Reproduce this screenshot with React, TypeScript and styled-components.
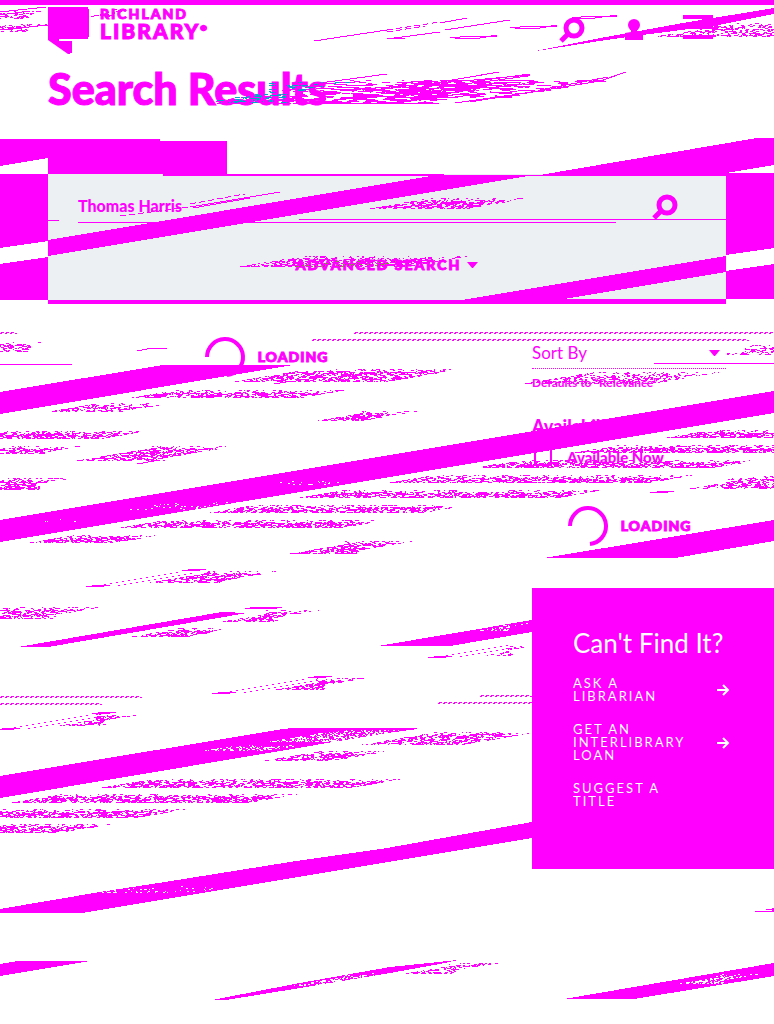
import React from "react";
import styled, { createGlobalStyle } from "styled-components";

const MAGENTA = "#ff00ff";
const PANEL = "#ecf0f3";

const GlobalStyle = createGlobalStyle`
  *, *::before, *::after { box-sizing: border-box; }
  body {
    margin: 0;
    background: #fff;
    color: ${MAGENTA};
    font-family: Lato, "Open Sans", sans-serif;
  }
  button, input, select { font: inherit; color: inherit; }
`;

const Page = styled.div`
  position: relative;
  min-height: 100vh;
  overflow: hidden;
  border-top: 5px solid ${MAGENTA};
`;

const Header = styled.header`
  display: flex;
  justify-content: space-between;
  align-items: flex-start;
  height: 56px;
  padding: 2px 61px 0 48px;
`;

const Brand = styled.a`
  display: flex;
  gap: 11px;
  color: inherit;
  text-decoration: none;
`;

const BrandText = styled.span`
  display: flex;
  flex-direction: column;
  font-weight: 900;
  -webkit-text-stroke: 1px ${MAGENTA};
`;

const BrandLine = styled.span<{ $large?: boolean }>`
  font-size: ${(p) => (p.$large ? 21 : 14)}px;
  line-height: ${(p) => (p.$large ? 20 : 14)}px;
  letter-spacing: 2px;
  white-space: nowrap;
`;

const Mark = styled.sup`
  font-size: 8px;
  line-height: 0;
  letter-spacing: 0;
`;

const Tools = styled.nav`
  display: flex;
  align-items: flex-start;
  padding-top: 8px;
  gap: 40px;
`;

const IconButton = styled.button<{ $lowered?: boolean }>`
  display: block;
  margin-top: ${(p) => (p.$lowered ? 2 : 0)}px;
  border: 0;
  padding: 0;
  background: none;
  line-height: 0;
  cursor: pointer;
`;

const Title = styled.h1`
  margin: 0;
  padding: 0 48px;
  font-size: 43px;
  line-height: 56px;
  font-weight: 900;
  -webkit-text-stroke: 1px ${MAGENTA};
`;

const SearchSection = styled.section`
  padding: 24px 48px 0;
`;

const Tab = styled.div`
  width: 179px;
  height: 33px;
  background: ${MAGENTA};
`;

const SearchPanel = styled.form`
  display: flex;
  flex-direction: column;
  align-items: center;
  height: 130px;
  padding: 17px 48px 0 30px;
  background: ${PANEL};
  border-bottom: 4px solid ${MAGENTA};
`;

const SearchRow = styled.div`
  display: flex;
  width: 100%;
  gap: 36px;
`;

const SearchInput = styled.input`
  flex: 1;
  min-width: 0;
  height: 32px;
  padding: 0 0 2px;
  border: 0;
  border-bottom: 1px solid ${MAGENTA};
  border-radius: 0;
  background: transparent;
  outline: 0;
  font-size: 16px;
  font-weight: 900;
`;

const Advanced = styled.button`
  display: flex;
  align-items: center;
  gap: 6px;
  margin: 32px 0 0 18px;
  padding: 0;
  border: 0;
  background: none;
  font-size: 14px;
  line-height: 20px;
  font-weight: 900;
  letter-spacing: 2px;
  -webkit-text-stroke: 1px ${MAGENTA};
`;

const Columns = styled.main`
  display: grid;
  grid-template-columns: minmax(0, 1fr) 242px;
  column-gap: 48px;
  padding: 32px 0 155px 48px;
`;

const LoadingRow = styled.div<{ $side?: boolean }>`
  display: flex;
  justify-content: center;
  align-items: center;
  gap: 12px;
  height: 42px;
  margin: ${(p) => (p.$side ? "38px 48px 40px 0" : "0")};
  font-size: 14px;
  line-height: 20px;
  font-weight: 900;
  letter-spacing: 1px;
  -webkit-text-stroke: 1px ${MAGENTA};
`;

const Controls = styled.div`
  margin-right: 48px;
`;

const SortBox = styled.div`
  position: relative;
  border-bottom: 1px dotted ${MAGENTA};
`;

const SortSelect = styled.select`
  display: block;
  width: 100%;
  height: 32px;
  padding: 0;
  border: 0;
  appearance: none;
  background: none;
  font-size: 17px;
`;

const SortArrow = styled.svg`
  position: absolute;
  top: 14px;
  right: 6px;
`;

const Hint = styled.p`
  margin: 5px 0 0;
  font-size: 12px;
  line-height: 18px;
  font-weight: 700;
`;

const FilterTitle = styled.h2`
  margin: 22px 0 0;
  font-size: 18px;
  line-height: 24px;
  font-weight: 900;
`;

const CheckLabel = styled.label`
  display: flex;
  align-items: center;
  gap: 15px;
  height: 20px;
  margin: 9px 0 0 2px;
  font-size: 15px;
  font-weight: 900;
`;

const Checkbox = styled.input`
  appearance: none;
  width: 18px;
  height: 18px;
  margin: 0;
  border: 2px solid ${MAGENTA};
  background: #fff;
`;

const HelpCard = styled.section`
  margin-top: 41px;
  padding: 40px 44px 41px 41px;
  background: ${MAGENTA};
  color: #fff;
`;

const HelpTitle = styled.h2`
  margin: 0 0 19px;
  font-size: 26px;
  line-height: 30px;
  font-weight: 400;
  white-space: nowrap;
`;

const HelpLink = styled.a`
  display: flex;
  justify-content: space-between;
  align-items: center;
  margin-bottom: 20px;
  color: inherit;
  font-size: 13px;
  line-height: 13px;
  letter-spacing: 2px;
  text-decoration: none;
`;

const HelpLine = styled.span`
  display: block;
`;

const Streaks = styled.svg`
  position: absolute;
  top: -5px;
  left: 0;
  width: 100%;
  height: auto;
  pointer-events: none;
  shape-rendering: crispEdges;
`;

const Magnifier = () => (
  <svg width="26" height="26" viewBox="0 0 26 26" fill="none" stroke={MAGENTA} strokeWidth="5" aria-hidden="true">
    <circle cx="15" cy="11" r="8" />
    <path d="M9 17L2 24" />
  </svg>
);

const Caret = () => (
  <svg width="11" height="6" viewBox="0 0 11 6" aria-hidden="true">
    <path d="M0 0H11L6 6H5Z" fill={MAGENTA} />
  </svg>
);

const Arrow = () => (
  <svg width="14" height="12" viewBox="0 0 14 12" fill="none" stroke="#fff" strokeWidth="2" aria-hidden="true">
    <path d="M1 6H12M7 1L12 6L7 11" />
  </svg>
);

const Spinner = () => (
  <svg width="42" height="42" viewBox="0 0 42 42" fill="none" stroke={MAGENTA} strokeWidth="4" aria-hidden="true">
    <path d="M3 21A18 18 0 1 1 23 39" />
  </svg>
);

/* Speckled slanted patches: left, right, top, bottom, fill ratio in percent. */
type Patch = [number, number, number, number, number];

function speckle(patches: Patch[], longest = 4): string {
  let seed = 41;
  const next = () => {
    seed = (seed * 1103515245 + 12345) % 2147483648;
    return seed / 2147483648;
  };
  let d = "";
  patches.forEach(([left, right, top, bottom, fill]) => {
    const rows = bottom - top;
    for (let i = 0; i < rows; i++) {
      const fromBottom = rows - 1 - i;
      const edge = i < 2 ? 0.4 : i === 2 ? 0.8 : 1.1;
      const start = left <= 0 ? 0 : left + Math.min(fromBottom * 6, (right - left) * 0.45);
      const end = right >= 774 ? 774 : right - Math.min(i * 6, (right - left) * 0.45);
      let x = start;
      while (x < end) {
        const len = 1 + Math.floor(next() * longest);
        if (next() * 100 < fill * edge) d += `M${Math.round(x)} ${top + i}h${len}v1h-${len}z`;
        x += len;
      }
    }
  });
  return d;
}

function zigzag(x1: number, x2: number, y: number): string {
  let d = "";
  for (let x = x1; x < x2; x += 5) {
    d += `M${x} ${y + 1}h2v1h-2z`;
    if (x + 4 <= x2) d += `M${x + 1} ${y}h3v1h-3z`;
  }
  return d;
}

function outline(x1: number, y1: number, x2: number, y2: number): string {
  let d = `M${x1} ${y1}h18v1h-18zM${x1 + 6} ${y1 - 1}h18v1h-18z`;
  if (x2 < 500) d += `M${x2} ${y2}h18v1h-18zM${x2 + 6} ${y2 - 1}h18v1h-18z`;
  for (let x = x1 + 18; x < x2; x += 6) {
    const y = y1 - 1 - Math.round((x - x1 - 12) / 6);
    d += `M${x} ${y}h2v1h-2zM${x + 14} ${y + 1}h2v1h-2z`;
  }
  return d;
}

const bands = [
  "0,139 160,139 160,141 131,141 48,154 48,158 0,166",
  "0,174 48,174 48,241 0,248",
  "0,264 48,257 48,300 0,300",
  "534,176 757,138 774,138 774,165 726,173 726,176",
  "726,173 774,173 774,248 726,255",
  "726,271 774,264 774,299 726,299",
  "48,240 437,175 528,176 48,256",
  "462,300 726,256 726,272 564,299 726,299 726,301 462,301",
  "0,392 163,365 293,365 0,414",
  "0,520 774,391 774,413 0,542",
  "544,558 774,520 774,541 675,558",
  "18,647 222,612 247,613 48,647",
  "378,646 532,620 532,632 450,646",
  "0,776 283,729 418,729 387,733 0,798",
  "0,909 100,892 165,882 290,862 387,848 532,822 532,838 82,913 0,913",
  "0,964 18,961 90,961 0,976",
  "212,1000 300,983 390,967 458,960 445,963 390,973 300,988 226,1000",
  "564,999 774,963 774,976 634,999",
  "530,52 606,37 683,23 774,8 774,14 713,26 642,35 606,40",
];

const rules: [number, number, number, number][] = [
  [163, 174, 281, 2],
  [227, 175, 499, 1],
  [48, 220, 11, 1],
  [299, 219, 427, 1],
  [0, 364, 72, 1],
  [654, 363, 120, 1],
  [288, 728, 129, 1],
  [245, 608, 32, 1],
  [250, 607, 32, 1],
  [650, 492, 18, 1],
  [657, 491, 17, 1],
  [755, 911, 19, 1],
  [766, 909, 8, 1],
  [772, 908, 2, 4],
];

const strokes = [
  "M314 41L387 30M387 39L440 32M387 39L405 38M445 30L510 20",
  "M440 23L467 18M450 38L470 36H497M455 38H480L497 35",
  "M510 28L530 26H557M515 28H540L557 25M572 18L590 16H617M577 18H595L617 15",
  "M320 83L387 74M435 83L499 72M440 83L530 75M520 94L600 81L626 72M540 90L608 77",
  "M470 82L530 74M475 83L528 76M470 102L550 89M455 103L540 91M387 98L460 84",
  "M190 207L280 192M193 208L250 198",
  "M137 351L152 348H167M0 12L46 7M0 15L30 11",
  "M0 30L48 25M274 384L292 381M137 464L160 460",
];

const dashes = [
  "M387 30L440 22M387 32L425 26M120 216L190 207M190 204L245 194",
];

const fine: Patch[] = [
  [0, 50, 11, 19, 45], [0, 50, 24, 32, 45], [88, 132, 9, 17, 42],
  [655, 774, 23, 37, 38],
  [368, 528, 198, 209, 56], [240, 468, 256, 267, 50],
  [0, 52, 342, 352, 38], [721, 774, 345, 355, 35],
  [235, 461, 369, 382, 50], [132, 345, 390, 398, 58], [49, 170, 403, 412, 54],
  [318, 416, 411, 421, 56], [0, 145, 431, 439, 58], [0, 80, 446, 454, 54],
  [77, 234, 446, 461, 54], [0, 70, 478, 490, 56],
  [525, 720, 372, 384, 40], [666, 774, 430, 438, 54], [575, 774, 445, 453, 56],
  [475, 757, 460, 468, 56], [390, 693, 475, 483, 56], [300, 602, 490, 498, 56],
  [210, 467, 505, 513, 56], [121, 384, 520, 528, 56], [30, 158, 535, 543, 56],
  [290, 412, 541, 554, 56], [690, 774, 476, 489, 46],
  [150, 277, 571, 583, 56], [0, 100, 607, 619, 54], [222, 320, 610, 622, 46],
  [132, 235, 628, 637, 50], [276, 364, 678, 690, 56], [60, 140, 714, 726, 54],
  [265, 387, 751, 761, 54], [102, 400, 779, 788, 56], [12, 297, 794, 803, 56],
  [0, 185, 809, 818, 56], [0, 110, 824, 833, 56],
  [362, 536, 732, 745, 54],
  [105, 190, 885, 893, 30],
  [405, 495, 963, 974, 42], [485, 532, 646, 656, 30],
];

const texture = speckle(fine, 3);
const sweep = speckle([
  [204, 460, 80, 104, 50], [310, 540, 80, 104, 60], [390, 608, 80, 98, 40],
], 12);
const tinted = speckle([[205, 348, 82, 103, 28]], 7);
const olive = speckle([[292, 408, 261, 267, 16]], 3);
const holes = speckle([
  [30, 100, 519, 523, 8], [130, 255, 500, 510, 8], [265, 345, 481, 485, 10],
  [205, 300, 745, 751, 36], [270, 400, 730, 742, 40],
  [480, 531, 623, 631, 40], [100, 230, 886, 893, 14],
  [292, 400, 973, 986, 30], [680, 760, 974, 984, 46],
], 2);

const zigzags =
  zigzag(0, 17, 332) + zigzag(354, 774, 332) + zigzag(312, 749, 339) +
  zigzag(0, 143, 696) + zigzag(0, 101, 703) + zigzag(480, 532, 695) + zigzag(438, 532, 702);

const outlines =
  outline(86, 586, 182, 570) + outline(212, 693, 308, 677) + outline(-4, 729, 92, 713) + outline(428, 657, 508, 643);

const Artwork = () => (
  <Streaks viewBox="0 0 774 1024" fill={MAGENTA} aria-hidden="true">
    <polygon points="48,141 131,141 48,147" fill={PANEL} />
    {bands.map((points) => <polygon key={points} points={points} />)}
    {rules.map(([x, y, width, height]) => (
      <rect key={`${x}-${y}`} x={x} y={y} width={width} height={height} />
    ))}
    <path d={strokes.join("")} fill="none" stroke={MAGENTA} />
    <path d={dashes.join("")} fill="none" stroke={MAGENTA} strokeDasharray="6 3" />
    <path d={texture + sweep + zigzags + outlines} />
    <path d={tinted} fill="#00a8cc" />
    <path d={olive} fill="#78a02c" />
    <path d={holes} fill="#fff" />
  </Streaks>
);

const helpLinks = [
  { lines: ["ASK A", "LIBRARIAN"], arrow: true },
  { lines: ["GET AN", "INTERLIBRARY", "LOAN"], arrow: true },
  { lines: ["SUGGEST A", "TITLE"], arrow: false },
];

export default function App() {
  return (
    <Page>
      <GlobalStyle />
      <Header>
        <Brand href="#" aria-label="Richland Library">
          <svg width="41" height="47" viewBox="0 0 41 47" fill={MAGENTA} aria-hidden="true">
            <path d="M0 0H40V2H41V30H40V32H11V34H24V46H22V47H20L0 33Z" />
          </svg>
          <BrandText>
            <BrandLine>RICHLAND</BrandLine>
            <BrandLine $large>LIBRARY<Mark>®</Mark></BrandLine>
          </BrandText>
        </Brand>
        <Tools aria-label="Site tools">
          <IconButton $lowered aria-label="Search"><Magnifier /></IconButton>
          <IconButton aria-label="Account">
            <svg width="18" height="25" viewBox="0 0 18 25" fill={MAGENTA} aria-hidden="true">
              <circle cx="9" cy="10" r="6" />
              <path d="M6 14H12V17H18V25H0V18L6 17Z" />
            </svg>
          </IconButton>
          <IconButton aria-label="Menu">
            <svg width="30" height="24" viewBox="0 0 30 24" fill={MAGENTA} aria-hidden="true">
              <path d="M0 0H30V4H0ZM0 10H30V14H0ZM0 20H30V24H0ZM19 4H30V10H19Z" />
            </svg>
          </IconButton>
        </Tools>
      </Header>
      <Title>Search Results</Title>
      <SearchSection>
        <Tab />
        <SearchPanel onSubmit={(e) => e.preventDefault()}>
          <SearchRow>
            <SearchInput aria-label="Search the catalog" defaultValue="Thomas Harris" />
            <IconButton type="submit" aria-label="Submit search"><Magnifier /></IconButton>
          </SearchRow>
          <Advanced type="button">ADVANCED SEARCH <Caret /></Advanced>
        </SearchPanel>
      </SearchSection>
      <Columns>
        <LoadingRow role="status"><Spinner />LOADING</LoadingRow>
        <aside>
          <Controls>
            <SortBox>
              <SortSelect aria-label="Sort By" defaultValue="sort">
                <option value="sort">Sort By</option>
              </SortSelect>
              <SortArrow width="11" height="6" viewBox="0 0 11 6" aria-hidden="true">
                <path d="M0 0H11L6 6H5Z" fill={MAGENTA} />
              </SortArrow>
            </SortBox>
            <Hint>Defaults to “Relevance”</Hint>
            <FilterTitle>Availability</FilterTitle>
            <CheckLabel><Checkbox type="checkbox" />Available Now</CheckLabel>
          </Controls>
          <LoadingRow $side role="status"><Spinner />LOADING</LoadingRow>
          <HelpCard>
            <HelpTitle>Can't Find It?</HelpTitle>
            {helpLinks.map(({ lines, arrow }) => (
              <HelpLink href="#" key={lines[0]}>
                <span>
                  {lines.map((line) => <HelpLine key={line}>{line}</HelpLine>)}
                </span>
                {arrow && <Arrow />}
              </HelpLink>
            ))}
          </HelpCard>
        </aside>
      </Columns>
      <Artwork />
    </Page>
  );
}
